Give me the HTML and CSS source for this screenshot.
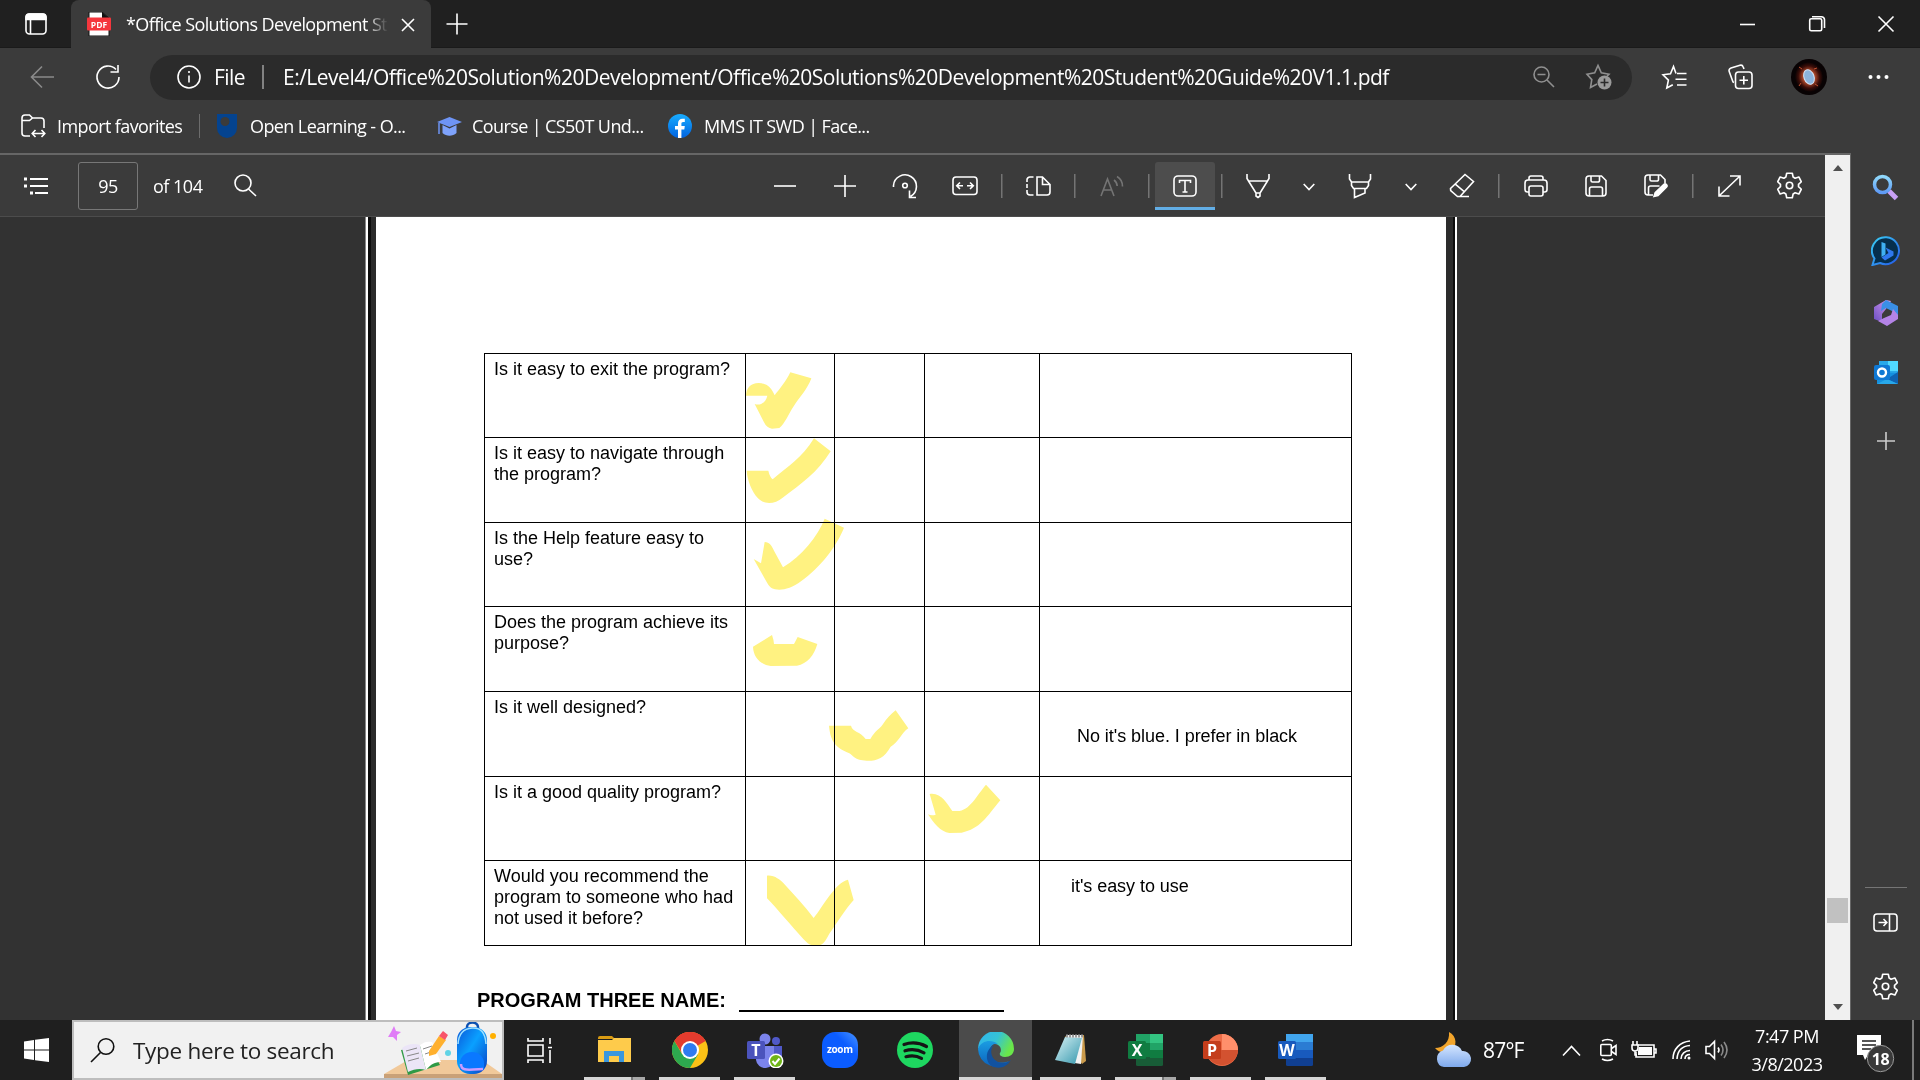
FILE: index.html
```html
<!DOCTYPE html>
<html lang="en">
<head>
<meta charset="utf-8">
<title>Office Solutions Development Student Guide V1.1.pdf</title>
<link rel="stylesheet" href="styles.css">
</head>
<body>
<svg class="defs" width="0" height="0" aria-hidden="true">
  <defs>
    <symbol id="gear" viewBox="0 0 24 26"><path d="M9.3 1.2h5.4l.8 3.7 1.9 1.1 3.6-1.2 2.4 4.6-2.7 2.5v2.2l2.7 2.5-2.4 4.6-3.6-1.2-1.9 1.1-.8 3.7H9.3l-.8-3.7L6.600 20 3 21.200.600 16.600l2.700-2.500v-2.200L.600 9.400 3 4.800 6.600 6l1.900-1.100z" stroke-linejoin="round"/><circle cx="12" cy="13" r="3.1"/></symbol>
    <linearGradient id="gBlue" x1="0" y1="0" x2="1" y2="1"><stop offset="0" stop-color="#3ad0f5"/><stop offset="1" stop-color="#2456e8"/></linearGradient>
    <linearGradient id="gLens" x1="0" y1="0" x2="0" y2="1"><stop offset="0" stop-color="#8fd8fb"/><stop offset="1" stop-color="#5f9bf5"/></linearGradient>
    <linearGradient id="gEdge" x1="0" y1="0" x2="1" y2="0.4"><stop offset="0" stop-color="#2fb4ee"/><stop offset=".55" stop-color="#35c3d6"/><stop offset="1" stop-color="#6ae64a"/></linearGradient>
    <linearGradient id="gEdge2" x1="0" y1="0" x2="0" y2="1"><stop offset="0" stop-color="#1b9de2"/><stop offset="1" stop-color="#0b63be"/></linearGradient>
    <linearGradient id="gCloud" x1="0" y1="0" x2="0" y2="1"><stop offset="0" stop-color="#d5e6ff"/><stop offset="1" stop-color="#7ea9ec"/></linearGradient>
    <linearGradient id="gFb" x1="0" y1="0" x2="0" y2="1"><stop offset="0" stop-color="#18acfe"/><stop offset="1" stop-color="#0163e0"/></linearGradient>
    <linearGradient id="gPack" x1="0" y1="0" x2="1" y2="1"><stop offset="0" stop-color="#0a55d8"/><stop offset=".45" stop-color="#0aa0ff"/><stop offset="1" stop-color="#0a3fc4"/></linearGradient>
    <linearGradient id="gPad" x1="0" y1="0" x2="1" y2="1"><stop offset="0" stop-color="#d8f2f5"/><stop offset="1" stop-color="#3497ad"/></linearGradient>
    <linearGradient id="gPurple" x1="0" y1="1" x2="1" y2="0"><stop offset="0" stop-color="#6a4fc4"/><stop offset="1" stop-color="#d99af0"/></linearGradient>
    <linearGradient id="gZoom" x1="1" y1="0" x2="0" y2="1"><stop offset="0" stop-color="#4a96ff"/><stop offset=".35" stop-color="#0b5cff"/><stop offset="1" stop-color="#0b5cff"/></linearGradient>
    <radialGradient id="gNebula" cx=".5" cy=".5" r=".5"><stop offset="0" stop-color="#b9d8f5"/><stop offset=".25" stop-color="#8fa8cc"/><stop offset=".42" stop-color="#b04a2c"/><stop offset=".75" stop-color="#3a0d08"/><stop offset="1" stop-color="#080203"/></radialGradient>
  </defs>
</svg>

<header class="tabstrip">
  <svg class="ic tab-actions" width="22" height="22" viewBox="0 0 22 22"><rect x="1" y="1" width="20" height="20" rx="3.500"/><path d="M1 5.500V4a3 3 0 0 1 3-3h14a3 3 0 0 1 3 3v2.500H1z" fill="#fff"/><path d="M5.500 6v15"/></svg>
  <div class="tab">
    <svg class="pdf-icon" width="24" height="24" viewBox="0 0 24 24"><path d="M2 0h13l7 6v18H2z" fill="#fff" stroke="#111"/><path d="M15 0l7 6h-7z" fill="#111"/><rect y="5.500" width="24" height="13" rx="1" fill="#f5363d"/><text x="12" y="16" text-anchor="middle" class="pdf-label">PDF</text></svg>
    <span class="tab-title">*Office Solutions Development St</span>
    <svg class="ic tab-close" width="14" height="14" viewBox="0 0 14 14"><path d="M1 1l12 12M13 1L1 13"/></svg>
  </div>
  <svg class="ic new-tab" width="22" height="22" viewBox="0 0 22 22"><path d="M11 .5v21M.5 11h21"/></svg>
  <div class="window-controls">
    <svg class="ic" width="16" height="16" viewBox="0 0 16 16"><path d="M0 8.500h15"/></svg>
    <svg class="ic" width="16" height="16" viewBox="0 0 16 16"><rect x=".7" y="2.700" width="12" height="12" rx="1.500"/><path d="M3 .7h9.500a3 3 0 0 1 3 3V12"/></svg>
    <svg class="ic" width="16" height="16" viewBox="0 0 16 16"><path d="M.5 .5l15 15M15.500 .5l-15 15"/></svg>
  </div>
</header>

<nav class="navbar">
  <svg class="ic back" width="24" height="24" viewBox="0 0 24 24"><path d="M24 12H1.500M12 1.500L1.500 12 12 22.500"/></svg>
  <svg class="ic refresh" width="24" height="26" viewBox="0 0 24 26"><path d="M20 5.500A11 11 0 1 0 23 13M22 1v7h-7.500"/></svg>
  <div class="address">
    <svg class="ic" width="24" height="24" viewBox="0 0 24 24"><circle cx="12" cy="12" r="11"/><path d="M12 10.500v7M12 6v2"/></svg>
    <span class="scheme">File</span>
    <i class="bar"></i>
    <span class="url">E:/Level4/Office%20Solution%20Development/Office%20Solutions%20Development%20Student%20Guide%20V1.1.pdf</span>
    <svg class="ic dim" width="22" height="22" viewBox="0 0 22 22"><circle cx="8.500" cy="8.500" r="7.500"/><path d="M4.500 8.500h8M14 14l7 7"/></svg>
    <svg class="ic dim star-add" width="26" height="26" viewBox="0 0 26 26"><path d="M11 20l-6.500 3.500L5.800 15.600 1 10.200l7.700-1.300L12 1.500l3.300 7.400 7.700 1.300-2 2"/><circle cx="18.500" cy="18.500" r="7" fill="#9a9a9a" stroke="none"/><path d="M18.500 14.500v8M14.500 18.500h8" stroke="#2b2b2b"/></svg>
  </div>
  <svg class="ic favs" width="25" height="25" viewBox="0 0 25 25"><path d="M14 8.500L11.500 1.500 8.500 8.700 1 9.800l5.400 5.300L4.800 23l6-3.300M15 8.500h9.500M13.500 14.300h11M15 20h9.500"/></svg>
  <svg class="ic collect" width="25" height="26" viewBox="0 0 25 26"><rect x="7.500" y="8" width="16.500" height="16.500" rx="3"/><path d="M15.800 12v8.500M11.500 16.200H20M6 18.500l-1-.5L1.200 7.500c-.6-1.600.3-3 1.800-3.500L12 1.200c1.500-.4 2.700.3 3.200 1.800l.8 2"/></svg>
  <svg class="avatar" width="36" height="36" viewBox="0 0 36 36"><circle cx="18" cy="18" r="18" fill="#080203"/><ellipse cx="18" cy="18" rx="14" ry="15" fill="url(#gNebula)" transform="rotate(-20 18 18)"/><ellipse cx="18" cy="18" rx="5" ry="7.500" fill="#8cb4dd" stroke="#d5e4f5" transform="rotate(-20 18 18)"/><path d="M24 25l3 2M11 10l-3-2M23 10l3-1M10 24l-2 3" stroke="#c05030"/></svg>
  <svg class="more" width="22" height="6" viewBox="0 0 22 6"><circle cx="2.500" cy="3" r="2"/><circle cx="10.500" cy="3" r="2"/><circle cx="18.500" cy="3" r="2"/></svg>
</nav>

<div class="favbar">
  <svg class="ic" width="25" height="24" viewBox="0 0 25 24"><path d="M9 22H4a3 3 0 0 1-3-3V4a3 3 0 0 1 3-3h4.500l3 3H20a3 3 0 0 1 3 3v7M1 6.500h7.500l3-2.500M11.500 19.500h12M14.500 16l-3.300 3.500 3.300 3.500M20.500 16l3.300 3.500-3.300 3.500"/></svg>
  <span class="fav f1">Import favorites</span>
  <i class="bar"></i>
  <svg class="shield" width="20" height="24" viewBox="0 0 20 24"><path d="M0 0h20v14a10 10 0 0 1-20 0z" fill="#04438f"/><circle cx="8" cy="7.500" r="4.500" fill="#3b3b3b"/></svg>
  <span class="fav f2">Open Learning - O...</span>
  <svg class="cap" width="25" height="20" viewBox="0 0 25 20"><path d="M0 6L12.500 1 25 6l-12.500 5z" fill="#6e94f5"/><path d="M5.500 9l7 3.500 7-3.500v8c-4 3.500-10 3.500-14 0z" fill="#7ea2fb"/><path d="M2 7v11" stroke="#6e94f5" stroke-width="1.500"/></svg>
  <span class="fav f3">Course | CS50T Und...</span>
  <svg class="fb" width="24" height="24" viewBox="0 0 24 24"><circle cx="12" cy="12" r="12" fill="url(#gFb)"/><path d="M10 24v-8.500H7V12h3V9.500c0-3 1.800-4.800 4.600-4.800h2.200v3.200h-1.600c-1.400 0-1.800.8-1.800 1.800V12h3.400l-.5 3.500h-2.900V24z" fill="#fff"/></svg>
  <span class="fav f4">MMS IT SWD | Face...</span>
</div>

<main class="main">
  <section class="viewer">
    <div class="reader">
      <div class="pdfbar">
        <svg class="ic toc" width="24" height="18" viewBox="0 0 24 18"><path d="M6 2h18M6 9h18M11 16h13" stroke-width="2"/><path d="M0 2h3M0 9h3M6 16h3" stroke-width="3"/></svg>
        <span class="page-input">95</span>
        <span class="page-total">of 104</span>
        <svg class="ic find" width="23" height="23" viewBox="0 0 23 23"><circle cx="9" cy="9" r="8"/><path d="M14.500 15l7.500 7"/></svg>
        <div class="tools">
          <span class="tool"><svg class="ic" width="22" height="22" viewBox="0 0 22 22"><path d="M0 11h22"/></svg></span>
          <span class="tool"><svg class="ic" width="22" height="22" viewBox="0 0 22 22"><path d="M11 0v22M0 11h22"/></svg></span>
          <span class="tool"><svg class="ic" width="26" height="26" viewBox="0 0 26 26"><path d="M1.500 14V12.500a11.500 11.500 0 1 1 17 11M24 24.500h-6.500V17.500"/><circle cx="13" cy="12.500" r="2.300"/></svg></span>
          <span class="tool"><svg class="ic" width="26" height="20" viewBox="0 0 26 20"><rect x="1" y="1" width="24" height="17.500" rx="3"/><path d="M11 9.800H5M8 6.500L4.700 9.800 8 13M15 9.800h6M18 6.500l3.300 3.300L18 13"/></svg></span>
          <i class="sep"></i>
          <span class="tool"><svg class="ic" width="25" height="20" viewBox="0 0 25 20"><path d="M7.500 1H4.500A3 3 0 0 0 1 4.500V6M1 8v4M1 14v2a3 3 0 0 0 3 3h3.500" /><path d="M11 1h5.500L24 8.500V16a3 3 0 0 1-3 3H11zM16.500 1v7.500H24"/></svg></span>
          <i class="sep"></i>
          <span class="tool"><svg class="ic faint" width="24" height="22" viewBox="0 0 24 22"><path d="M1 21L7.500 4 14 21M3.500 15h8M14 5c2 1.500 3 3.500 3.200 6M17 1.500c3.500 2 5.500 5.500 5.500 10"/></svg></span>
          <i class="sep"></i>
          <span class="tool active"><svg class="ic" width="24" height="22" viewBox="0 0 24 22"><rect x="1" y="1" width="22" height="20" rx="4"/><path d="M6.500 8V5.500h11V8M12 5.500v11.500M9.500 17h5"/></svg></span>
          <i class="sep"></i>
          <span class="tool"><svg class="ic" width="24" height="24" viewBox="0 0 24 24"><path d="M1 0v4.500L2.500 7h19L23 4.500V0M2.500 7L10 19v3l2 1.500 2-1.500v-3L21.500 7M10 19h4"/></svg></span>
          <span class="drop"><svg class="ic" width="12" height="8" viewBox="0 0 12 8"><path d="M.7 1L6 6.500 11.300 1"/></svg></span>
          <span class="tool"><svg class="ic" width="24" height="24" viewBox="0 0 24 24"><path d="M1.500 0v5l2 3h17l2-3V0M3.500 8v3.500l2 3H18.500l2-3V8M6.500 14.500v9l10.500-4.500v-4.500"/></svg></span>
          <span class="drop"><svg class="ic" width="12" height="8" viewBox="0 0 12 8"><path d="M.7 1L6 6.500 11.300 1"/></svg></span>
          <span class="tool"><svg class="ic" width="26" height="25" viewBox="0 0 26 25"><path d="M1.500 15.500L16 1.500l8.500 7L11 23.500H8.500L1.700 17.500zM6 10.800l9.500 8M8.500 23.500H20"/></svg></span>
          <i class="sep"></i>
          <span class="tool"><svg class="ic" width="24" height="22" viewBox="0 0 24 22"><path d="M5 5V3a2 2 0 0 1 2-2h10a2 2 0 0 1 2 2v2M5 17H3.500A2.500 2.500 0 0 1 1 14.500V8a3 3 0 0 1 3-3h16a3 3 0 0 1 3 3v6.500a2.500 2.500 0 0 1-2.500 2.500H19"/><rect x="5" y="11" width="14" height="10" rx="2"/></svg></span>
          <span class="tool"><svg class="ic" width="22" height="22" viewBox="0 0 22 22"><path d="M4 1h12.500L21 5.500V18a3 3 0 0 1-3 3H4a3 3 0 0 1-3-3V4a3 3 0 0 1 3-3zM6 1v4.500a1.500 1.500 0 0 0 1.500 1.500H13a1.500 1.500 0 0 0 1.500-1.500V1M4.500 21v-7A2 2 0 0 1 6.500 12h9a2 2 0 0 1 2 2v7"/></svg></span>
          <span class="tool"><svg class="ic" width="24" height="24" viewBox="0 0 24 24"><path d="M9 21H4a3 3 0 0 1-3-3V4a3 3 0 0 1 3-3h12.500L21 5.500V9M6 1v4.500a1.500 1.500 0 0 0 1.500 1.500H13a1.500 1.500 0 0 0 1.500-1.500V1M4.500 21v-7A2 2 0 0 1 6.500 12h9"/><path d="M10 22.500l1.200-3.800L19.700 10.500a1.900 1.900 0 0 1 2.700 2.700L14 21.500z" fill="#fff"/></svg></span>
          <i class="sep"></i>
          <span class="tool"><svg class="ic" width="23" height="22" viewBox="0 0 23 22"><path d="M1.500 20.500L21.500 1.500M12 1h10v9.500M1 11.500V21h10.500"/></svg></span>
          <span class="tool"><svg class="ic" width="25" height="27"><use href="#gear"/></svg></span>
        </div>
      </div>
      <div class="canvas">
        <div class="edge left"></div>
        <article class="page">
          <div class="form">
            <table class="survey">
              <colgroup><col class="c1"><col class="c2"><col class="c3"><col class="c4"><col class="c5"></colgroup>
              <tr class="r84"><td>Is it easy to exit the program?</td><td></td><td></td><td></td><td></td></tr>
              <tr class="r85"><td>Is it easy to navigate through<br>the program?</td><td></td><td></td><td></td><td></td></tr>
              <tr class="r84"><td>Is the Help feature easy to<br>use?</td><td></td><td></td><td></td><td></td></tr>
              <tr class="r85"><td>Does the program achieve its<br>purpose?</td><td></td><td></td><td></td><td></td></tr>
              <tr class="r85"><td>Is it well designed?</td><td></td><td></td><td></td><td class="note n1">No it's blue. I prefer in black</td></tr>
              <tr class="r84"><td>Is it a good quality program?</td><td></td><td></td><td></td><td></td></tr>
              <tr class="r85"><td>Would you recommend the<br>program to someone who had<br>not used it before?</td><td></td><td></td><td></td><td class="note n2">it's easy to use</td></tr>
            </table>
            <svg class="marks" width="300" height="680" viewBox="0 0 900 2040">
              <path d="M78 167C78 145 92 129 116 129C141 129 156 146 164 166C176 150 199 123 211 97L274 115C264 145 238 173 222 197C206 221 194 252 178 264L156 266C146 265 138 259 132 247L104 192C122 198 138 186 142 167Z"/>
              <path d="M80 392H145Q149 410 158 418C205 378 245 355 282 295L332 334C294 396 244 432 188 473C165 492 135 496 114 475C94 452 82 420 80 392Z"/>
              <path d="M101 657L123 670L134 606C149 606 155 617 162 632L189 682C245 647 293 590 314 536L372 563C350 619 300 683 244 723C213 746 187 752 165 748C151 745 146 736 140 726Z"/>
              <path d="M99 920L156 885Q161 899 162 912H222L233 891L292 912C282 947 262 971 231 977L152 978C121 974 100 951 99 920Z"/>
              <path transform="translate(0 1020)" d="M327 137H393C398 158 420 152 437 177H451C466 151 478 147 487 135C501 115 512 102 527 91L565 145C545 158 536 187 512 200C492 236 469 243 440 242C404 242 397 225 388 220C350 203 332 190 327 137Z"/>
              <path transform="translate(0 1020)" d="M629 342C664 337 679 369 697 393H712C749 393 770 346 798 314L841 361C800 411 780 447 725 458L688 459C662 456 641 430 624 403Q635 408 647 404Z"/>
              <path transform="translate(0 1020)" d="M141 587C164 585 180 600 190 609C224 646 253 677 281 714C308 681 346 607 384 599L401 660C376 687 348 733 329 760C318 778 312 796 295 796H276C267 795 260 786 250 777C213 737 173 688 141 655Z"/>
            </svg>
          </div>
          <p class="program"><b>PROGRAM THREE NAME:</b><i class="blank"></i></p>
        </article>
        <div class="edge right"></div>
      </div>
    </div>
    <div class="scrollbar"><i class="up"></i><i class="thumb"></i><i class="down"></i></div>
  </section>
  <aside class="sidebar">
    <svg width="30" height="30" viewBox="0 0 30 30"><path d="M18 18l7.500 7.500" stroke="#c9a0f5" stroke-width="5"/><circle cx="11.500" cy="11.500" r="8" fill="none" stroke="url(#gLens)" stroke-width="3.500"/></svg>
    <svg width="30" height="30" viewBox="0 0 30 30"><path d="M15.500 1.200A13.500 13.500 0 1 1 9 27l-7.500 2 2-6.500A13.500 13.500 0 0 1 15.500 1.200z" fill="#062f4d" stroke="url(#gBlue)" stroke-width="2"/><path d="M10.500 6l4 1.500v11l-4 2.500z" fill="#3fb0f2"/><path d="M14.500 11.500l8 4v4l-8.500 5-3.500-3 7-4.500z" fill="#2f78ee"/></svg>
    <svg width="26" height="28" viewBox="0 0 26 28"><path d="M13 1l5 1-5 8-4 5v8L1 20V8z" fill="url(#gPurple)"/><path d="M13 1l12 6v10l-6-5-6-3-5 3 1-7z" fill="#3a8fe6"/><path d="M25 16v4L14 27l-9-5 6-3 7-3 2-6z" fill="#b483e6"/></svg>
    <svg width="26" height="26" viewBox="0 0 26 26"><path d="M6 1h19v13H6z" fill="#28a8ea"/><path d="M15 1h10v10H15z" fill="#50d9ff"/><path d="M4 12l21 1v11H4z" fill="#1490df"/><path d="M14 19l11-7v12z" fill="#0f63b3"/><path d="M4 24l21 0-11-5z" fill="#28a8ea"/><rect x="1" y="5" width="16" height="15" rx="2" fill="#0f78d4"/><circle cx="9" cy="12.500" r="4" fill="none" stroke="#fff" stroke-width="2.400"/></svg>
    <svg class="ic plus" width="18" height="18" viewBox="0 0 18 18"><path d="M9 0v18M0 9h18"/></svg>
    <div class="side-foot">
      <svg class="ic" width="25" height="19" viewBox="0 0 25 19"><rect x="1" y="1" width="23" height="17" rx="3"/><path d="M16.500 1v17M5.500 9.500h8M10.500 6l3.300 3.500-3.300 3.500"/></svg>
      <svg class="ic" width="25" height="27"><use href="#gear"/></svg>
    </div>
  </aside>
</main>

<footer class="taskbar">
  <span class="start"><svg width="25" height="24" viewBox="0 0 25 24"><path d="M0 3.500L10 2v9.500H0zM11 1.800L25 0v11.500H11zM0 12.500h10V22L0 20.500zM11 12.500h14V24l-14-1.800z" fill="#fff"/></svg></span>
  <div class="search">
    <svg width="25" height="25" viewBox="0 0 25 25" class="ic lens"><circle cx="16" cy="8.500" r="7.800"/><path d="M10.500 14.500L1 24"/></svg>
    <span>Type here to search</span>
    <svg class="art" width="118" height="56" viewBox="0 0 118 56">
      <path d="M0 52L24 38H98l20 14v4H0z" fill="#f1c99a"/><path d="M0 52h118v4H0z" fill="#c9a178"/>
      <path d="M10 4l2 5 5 1-4 3 0 6-4-4-5 0 3-5z" fill="#e07cf7"/>
      <path d="M17 28l28-5 11 20-32 10z" fill="#2f9a46"/><path d="M18 26c5-4 12-5 18-3l6 25c-6-2-12-1-18 2z" fill="#ebe5f7"/><path d="M36 23c4-3 7-4 12-3l9 20c-6 0-10 2-15 8z" fill="#fff"/><path d="M22 29l11-3M23 34l12-3M24 39l11-3M39 27l9-3M41 32l9-3" stroke="#888"/>
      <path d="M45 29l10-15 7 4-10 14-7 2z" fill="#ffb02e"/><path d="M55 14l4-5 5 4-3 5z" fill="#f8546a"/>
      <circle cx="64" cy="31" r="3" fill="#5fd3e6"/><circle cx="109" cy="14" r="3" fill="#ffb000"/>
      <path d="M83 9V5a5.500 4.500 0 0 1 11 0v4" fill="none" stroke="#0b4fb0" stroke-width="2.500"/>
      <rect x="73" y="5" width="30" height="47" rx="13" fill="url(#gPack)"/><path d="M74 22Q75 7 88 6T102 22" fill="none" stroke="#9fe0ff" stroke-width="1.500"/><path d="M76 48V41a12 11 0 0 1 24 0v7z" fill="#0a78ff"/><path d="M77 42c0 7 5 6 22 5" fill="none" stroke="#c99bff" stroke-width="2.500"/>
    </svg>
  </div>
  <span class="app view"><svg class="ic" width="25" height="25" viewBox="0 0 25 25"><path d="M1 0v3h15V0M1 25v-3h15v3M1 7h15v11H1zM23 0v6M23 12v13M21 9.500h4" /></svg></span>
  <span class="app run split"><svg width="33" height="28" viewBox="0 0 33 28"><path d="M0 2a2 2 0 0 1 2-2h12l3 3H0z" fill="#d99b12"/><path d="M0 4h14l2-2h17v24H0z" fill="#fecb4b"/><path d="M6 26V15h20v11h-5v-6H11v6z" fill="#3b97dd"/></svg></span>
  <span class="app run"><svg width="36" height="36" viewBox="0 0 36 36"><circle cx="18" cy="18" r="18" fill="#fbc116"/><path d="M18 18L2.400 9A18 18 0 0 1 33.600 9z" fill="#e33b2e"/><path d="M2.400 9A18 18 0 0 0 18 36l8-13.500L10 22z" fill="#2da94f"/><path d="M2.400 9L10.500 22 18 18 18 9h15.600A18 18 0 0 0 2.400 9z" fill="#e33b2e"/><circle cx="18" cy="18" r="9" fill="#fff"/><circle cx="18" cy="18" r="7" fill="#2f7bf0"/></svg></span>
  <span class="app run"><svg width="38" height="36" viewBox="0 0 38 36"><circle cx="19" cy="7" r="5.500" fill="#7b83eb"/><circle cx="30" cy="9" r="4" fill="#5059c9"/><path d="M25 14h11v10a8 8 0 0 1-11 6z" fill="#5059c9"/><path d="M10 14h18v12a9 9 0 0 1-18 2z" fill="#7b83eb"/><rect x="1" y="9" width="18" height="18" rx="1.500" fill="#4b53bc"/><text x="10" y="24" text-anchor="middle" class="glyph">T</text><circle cx="30" cy="29" r="7.500" fill="#fff"/><circle cx="30" cy="29" r="6" fill="#6fb518"/><path d="M26.500 29l2.500 3 4.500-5.500" fill="none" stroke="#fff" stroke-width="2"/></svg></span>
  <span class="app"><svg width="36" height="36" viewBox="0 0 36 36"><rect width="36" height="36" rx="13" fill="url(#gZoom)"/><text x="18" y="21" text-anchor="middle" class="zoom-label" textLength="26">zoom</text></svg></span>
  <span class="app"><svg width="36" height="36" viewBox="0 0 36 36"><circle cx="18" cy="18" r="18" fill="#1ed760"/><path d="M7 12.500c7.500-2.500 16-1.500 22.500 2M8 18.800c6.500-2 13.500-1 19 2M9 24.700c5.500-1.500 11-1 15.500 1.700" fill="none" stroke="#151515" stroke-width="3.200" stroke-linecap="round"/></svg></span>
  <span class="app run current"><svg width="36" height="36" viewBox="0 0 36 36"><path d="M0 17A18 18 0 0 1 36 17c0 5-4 8-9 8-4 0-6-2-5-4 2-3 1-8-5-9C10 11 3 13 0 17z" fill="url(#gEdge)"/><path d="M0 17C3 8 14 7 20 12c-6-1-9 4-8 9 1 8 9 12 19 8A18 18 0 0 1 0 17z" fill="url(#gEdge2)"/><path d="M16 13c-5 5-3 14 4 17 5 2 10 1 13-2-4 7-11 9-17 7C7 32 6 18 16 13z" fill="#1152a0"/></svg></span>
  <span class="app run"><svg width="34" height="34" viewBox="0 0 34 34"><path d="M11 3l19-1 2 26-4 3z" fill="#c99a4b"/><path d="M12 2h17l-2 29-13-2z" fill="#f2f2f2"/><path d="M11 4l17 1-7 26L1 27z" fill="url(#gPad)"/><path d="M12 3h17" stroke="#999" stroke-width="3" stroke-dasharray="2 1"/></svg></span>
  <span class="app run split"><svg width="36" height="34" viewBox="0 0 36 34"><rect x="8" y="1" width="27" height="32" rx="1.500" fill="#185c37"/><path d="M8 1h14v11H8z" fill="#21a366"/><path d="M22 1h13v9H22z" fill="#33c481"/><path d="M22 10h13v7H22z" fill="#21a366"/><path d="M8 10h14v14H8z" fill="#107c41"/><path d="M22 17h13v8H22z" fill="#107c41"/><rect y="8" width="18" height="18" rx="1.500" fill="#107c41"/><text x="9" y="23" text-anchor="middle" class="glyph">X</text></svg></span>
  <span class="app run"><svg width="36" height="34" viewBox="0 0 36 34"><circle cx="19" cy="17" r="16" fill="#ed6c47"/><path d="M19 1a16 16 0 0 1 16 16H19z" fill="#ff8f6b"/><path d="M3.500 20A16 16 0 0 0 35 17H19z" fill="#d35230"/><rect y="8" width="18" height="18" rx="1.500" fill="#c43e1c"/><text x="9" y="23" text-anchor="middle" class="glyph">P</text></svg></span>
  <span class="app run"><svg width="36" height="34" viewBox="0 0 36 34"><rect x="8" y="1" width="27" height="32" rx="1.500" fill="#103f91"/><path d="M8 1h27v8H8z" fill="#41a5ee"/><path d="M8 9h27v8H8z" fill="#2b7cd3"/><path d="M8 17h27v8H8z" fill="#185abd"/><rect y="8" width="18" height="18" rx="1.500" fill="#185abd"/><text x="9" y="23" text-anchor="middle" class="glyph">W</text></svg></span>
  <div class="tray">
    <svg width="37" height="36" viewBox="0 0 37 36"><path d="M14 0c8 4 9 15 1 19C9 22 3 20 0 16c8 0 15-6 14-16z" fill="#f2a52c"/><path d="M9 35a8.500 8.500 0 0 1-1-16.500A10.500 10.500 0 0 1 27 19a8 8 0 0 1 2 16z" fill="url(#gCloud)"/></svg>
    <span class="temp">87°F</span>
    <svg class="ic chev" width="19" height="11" viewBox="0 0 19 11"><path d="M1 10.500L9.500 1.500l8.500 9"/></svg>
    <svg class="ic meet" width="17" height="22" viewBox="0 0 17 22"><rect x=".8" y="5.500" width="10.500" height="11" rx="1"/><path d="M11.500 9.500L16 6.500v9l-4.500-3M2 2q5.500-3 11 0M2 20q5.500 3 11 0"/></svg>
    <svg class="ic batt" width="25" height="18" viewBox="0 0 25 18"><path d="M7 4h16v12H5v-5M23 8h2v4h-2M2 0v4M6 0v4"/><path d="M1 4h6v3a3 3 0 0 1-6 0zM4 10v4h2"/><path d="M8 6h13v8H7v-4z" fill="#fff" stroke="none"/></svg>
    <svg class="ic wifi" width="20" height="20" viewBox="0 0 20 20"><path d="M1 19C1 9 8 2 18 1M5 19C5.500 11 10 6 18 5.500M9 19c0-5 4-8.500 9-8.500M13 19c0-3 2-4.500 5-4.500"/><circle cx="17" cy="18" r="1.500" fill="#fff" stroke="none"/></svg>
    <svg class="ic vol" width="23" height="20" viewBox="0 0 23 20"><path d="M1 6.500h3.500L9.500 1.500v17l-5-5H1zM13 7.500q2 2.500 0 5"/><path d="M16 4.500q4 5.500 0 11M19 2q6 8 0 16" stroke="#8b8b8b"/></svg>
    <span class="clock"><span class="time">7:47 PM</span><span class="date">3/8/2023</span></span>
    <span class="notif"><svg width="38" height="38" viewBox="0 0 38 38"><path d="M0 0h24v20H11l-3 5-2-5H0z" fill="#fff"/><path d="M5 6h14M5 10h14M5 14h9" stroke="#1f1f1f" stroke-width="1.500"/><circle cx="23.500" cy="23.500" r="13.200" fill="#3a3a3a" stroke="#999"/></svg><b>18</b></span>
    <i class="show-desktop"></i>
  </div>
</footer>
</body>
</html>
```
FILE: styles.css
```css
* { box-sizing: border-box; }
html, body { margin: 0; height: 100%; }
body {
  width: 1920px;
  height: 1080px;
  overflow: hidden;
  display: flex;
  flex-direction: column;
  background: #3b3b3b;
  color: #fff;
  font-family: "Open Sans", "Noto Sans", sans-serif;
  font-size: 18px;
}
svg { display: block; flex: none; }
.defs { position: absolute; }
.ic { fill: none; stroke: #fff; stroke-width: 1.6; overflow: visible; }
.dim { stroke: #8f8f8f; }
.faint { stroke: #747474; }
span { white-space: nowrap; }

/* Tab strip */
.tabstrip { height: 48px; flex: none; display: flex; align-items: center; background: #202020; border-bottom: 1px solid #1a1a1a; }
.tab-actions { margin-left: 25px; }
.tab { width: 360px; height: 48px; margin-left: 24px; padding: 0 16px; display: flex; align-items: center; align-self: flex-start; background: #3b3b3b; border-radius: 8px 8px 0 0; }
.pdf-label { font: bold 8.500px "Open Sans", sans-serif; fill: #fff; }
.tab-title { width: 262px; margin-left: 15px; overflow: hidden; letter-spacing: -0.6px; -webkit-mask-image: linear-gradient(90deg, #000 240px, transparent 262px); mask-image: linear-gradient(90deg, #000 240px, transparent 262px); }
.tab-close { margin-left: 13px; margin-top: 2px; }
.new-tab { margin-left: 15px; }
.window-controls { margin-left: auto; display: flex; gap: 53px; padding-right: 26px; }

/* Navigation row */
.navbar { height: 58px; flex: none; display: flex; align-items: center; }
.navbar .back { margin-left: 30px; stroke: #8a8a8a; }
.navbar .refresh { margin-left: 42px; }
.address { width: 1482px; height: 45px; margin-left: 30px; padding: 0 20px 0 27px; display: flex; align-items: center; border-radius: 23px; background: #2b2b2b; font-size: 21px; }
.scheme { width: 48px; margin-left: 13px; letter-spacing: -0.6px; }
.bar { width: 2px; height: 24px; background: #6c6c6c; }
.address .bar { background: #828282; }
.url { width: 1251px; margin-left: 19px; letter-spacing: -0.5px; }
.star-add { margin-left: 31px; }
.favs { margin-left: 30px; }
.collect { margin-left: 41px; }
.avatar { margin-left: 38px; }
.more { margin-left: 41px; fill: #fff; }

/* Favorites */
.favbar { height: 47px; flex: none; padding: 0 0 7px 21px; display: flex; align-items: center; }
.fav { letter-spacing: -0.6px; }
.f1 { width: 142px; margin-left: 11px; }
.favbar .bar { width: 1px; }
.shield { margin-left: 17px; }
.f2 { width: 174px; margin-left: 13px; }
.cap { margin-left: 13px; }
.f3 { width: 184px; margin-left: 10px; }
.fb { margin-left: 12px; }
.f4 { margin-left: 12px; }

/* Viewer */
.main { height: 867px; flex: none; display: flex; }
.viewer { width: 1851px; display: flex; border-top: 2px solid #666; border-right: 1px solid #666; }
.reader { width: 1825px; display: flex; flex-direction: column; }
.pdfbar { height: 62px; flex: none; padding-right: 6px; display: flex; align-items: center; border-bottom: 1px solid #4c4c4c; }
.toc { margin-left: 24px; }
.page-input { width: 60px; height: 48px; margin-left: 30px; display: grid; place-items: center; border: 1px solid #777; border-radius: 3px; letter-spacing: -0.5px; }
.page-total { width: 66px; margin-left: 15px; letter-spacing: -0.5px; }
.find { margin-left: 15px; }
.tools { margin-left: auto; display: flex; align-items: center; }
.tool { width: 60px; height: 48px; display: grid; place-items: center; }
.tool.active { background: #4d4d4d; border-bottom: 3px solid #62aee6; border-radius: 3px 3px 0 0; padding-top: 3px; }
.drop { width: 42px; height: 48px; display: grid; place-items: center; padding-top: 3px; }
.sep { width: 13.330px; height: 24px; background: linear-gradient(#747474, #747474) center / 1.500px 100% no-repeat; }

/* Document */
.canvas { height: 803px; padding-left: 365px; display: flex; background: #323232; color: #000; font: 18px/20.800px "Liberation Sans", Arial, sans-serif; }
.edge { width: 11px; background: #2b2b2b; border: solid #888; border-width: 0; }
.edge.left { background: linear-gradient(90deg, #888 0 1px, #fff 1px 3px, #0d0d0d 3px 6px, #2b2b2b 6px); }
.edge.right { background: linear-gradient(90deg, #2b2b2b 0 7px, #0d0d0d 7px 9px, #fff 9px 11px); }
.page { width: 1070px; height: 803px; padding: 136px 0 0 101px; overflow: hidden; background: #fff; }
.form { position: relative; margin-left: 7px; width: 868px; }
.survey { width: 868px; table-layout: fixed; border-collapse: collapse; border-spacing: 0; }
.survey td { border: 1px solid #000; padding: 5px 0 0 9px; vertical-align: top; white-space: nowrap; }
.c1 { width: 261px; } .c2 { width: 89px; } .c3 { width: 90px; } .c4 { width: 115px; } .c5 { width: 312px; }
.r84 { height: 84px; } .r85 { height: 85px; }
.survey td.note { letter-spacing: -0.05px; }
.survey td.n1 { padding: 34px 0 0 37px; }
.survey td.n2 { padding: 15px 0 0 31px; }
.marks { position: absolute; left: 236px; top: -13px; fill: #fff281; mix-blend-mode: multiply; }
.program { margin: 44px 0 0; display: flex; font-size: 20px; }
.blank { width: 265px; height: 2px; margin: 20px 0 0 13px; background: #000; }

/* Scrollbar */
.scrollbar { width: 25px; padding: 10px 0; display: flex; flex-direction: column; align-items: center; background: #f0f0f0; }
.up, .down { border: 5.500px solid transparent; }
.up { border-top: 0; border-bottom: 6px solid #505050; }
.down { border-bottom: 0; border-top: 6px solid #505050; margin-top: auto; }
.thumb { width: 21px; height: 25px; margin-top: 727px; background: #c1c1c1; }

/* Sidebar */
.sidebar { width: 69px; padding-top: 20px; display: flex; flex-direction: column; align-items: center; gap: 33px; }
.sidebar .plus { margin-top: 13px; stroke: #ccc; }
.side-foot { width: 42px; height: 133px; margin-top: auto; padding-top: 25px; display: flex; flex-direction: column; align-items: center; gap: 41px; border-top: 1px solid #757575; }

/* Taskbar */
.taskbar { height: 60px; flex: none; display: flex; background: #1f1f1f; }
.start { width: 72px; display: grid; place-items: center; }
.search { width: 432px; display: flex; align-items: center; border: 2px solid #bdbdbd; background: #f1f1f1; color: #222; font-size: 22.500px; }
.lens { margin-left: 16px; stroke: #111; }
.search span { width: 254px; margin-left: 18px; letter-spacing: -0.3px; }
.art { margin-left: -1px; }
.app { width: 61px; margin: 0 7px; display: grid; place-items: center; border-bottom: 3px solid transparent; border-top: 3px solid transparent; }
.app + .app { margin-left: 7px; }
.view { margin-left: 5px; }
.run { border-bottom-color: #d6d6d6; }
.split { border-image: linear-gradient(90deg, #d6d6d6 0 47px, #777 47px 49px, #a8a8a8 49px) 0 0 3 0; }
.current { width: 73px; margin: 0 1px; background: #4b4b4b; border-top-color: #4b4b4b; }
.glyph { font: bold 16px "Open Sans", sans-serif; fill: #fff; }
.zoom-label { font: bold 10px "Open Sans", sans-serif; fill: #fff; }
.tray { margin-left: auto; display: flex; align-items: center; }
.temp { width: 79px; margin-left: 11px; font-size: 21px; letter-spacing: -0.8px; }
.chev { margin-right: 19px; }
.meet { margin-right: 14px; }
.batt { margin-right: 16px; }
.wifi { margin-right: 13px; }
.vol { margin-right: 17px; }
.clock { width: 84px; display: flex; flex-direction: column; align-items: center; line-height: 28px; letter-spacing: -0.5px; }
.notif { position: relative; margin: 8px 0 0 28px; width: 38px; }
.notif b { position: absolute; left: 13px; top: 12px; width: 21px; text-align: center; font-size: 16px; line-height: 24px; letter-spacing: -0.5px; }
.show-desktop { width: 2px; height: 60px; margin: 0 6px 0 17px; background: #7a7a7a; }
```
